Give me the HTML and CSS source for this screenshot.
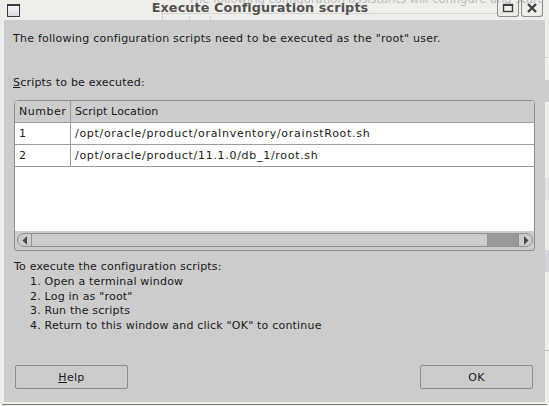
FILE: index.html
```html
<!DOCTYPE html>
<html>
<head>
<meta charset="utf-8">
<link rel="stylesheet" href="styles.css">
</head>
<body>
<div class="screen">
  <div class="titlebar">
    <div class="bgwin">
      <span class="bgtext">The following configuration assistants will configure and start</span>
      <span class="bgbox"></span>
      <span class="bgcol"></span>
    </div>
    <span class="winicon"></span>
    <span class="title">Execute Configuration scripts</span>
    <span class="tbtn">
      <svg width="12" height="10" viewBox="0 0 12 10"><rect x="1.5" y="1.5" width="9" height="7" fill="none" stroke="#3c3c3c" stroke-width="1.4"/><line x1="1.5" y1="2" x2="10.5" y2="2" stroke="#3c3c3c" stroke-width="2"/></svg>
    </span>
    <span class="tbtn">
      <svg width="12" height="10" viewBox="0 0 12 10"><path d="M2 1 L10 9 M10 1 L2 9" stroke="#3c3c3c" stroke-width="2.2" fill="none"/></svg>
    </span>
  </div>
  <div class="middle">
    <div class="leftedge"></div>
    <div class="dialog">
      <p class="intro">The following configuration scripts need to be executed as the "root" user.</p>
      <p class="label"><u>S</u>cripts to be executed:</p>
      <div class="tablebox">
        <div class="viewport">
          <div class="row head"><span class="c1">Number</span><span class="c2">Script Location</span></div>
          <div class="row"><span class="c1">1</span><span class="c2 path">/opt/oracle/product/oraInventory/orainstRoot.sh</span></div>
          <div class="row"><span class="c1">2</span><span class="c2 path">/opt/oracle/product/11.1.0/db_1/root.sh</span></div>
        </div>
        <div class="scrollarea">
          <div class="hscroll">
            <span class="sbtn left"><svg width="6" height="9" viewBox="0 0 6 9"><path d="M5 0 L5 9 L0.5 4.5 Z" fill="#4a4a4a"/></svg></span>
            <span class="track"></span>
            <span class="thumb"></span>
            <span class="sbtn right"><svg width="6" height="9" viewBox="0 0 6 9"><path d="M1 0 L1 9 L5.5 4.5 Z" fill="#4a4a4a"/></svg></span>
          </div>
        </div>
      </div>
      <div class="instructions">
        <p>To execute the configuration scripts:</p>
        <ol>
          <li>1. Open a terminal window</li>
          <li>2. Log in as "root"</li>
          <li>3. Run the scripts</li>
          <li>4. Return to this window and click "OK" to continue</li>
        </ol>
      </div>
      <div class="buttons">
        <button class="btn"><u>H</u>elp</button>
        <button class="btn">OK</button>
      </div>
    </div>
    <div class="rightedge">
      <span class="frag f1"></span>
      <span class="frag f2"></span>
      <span class="frag f3"></span>
      <span class="frag f4"></span>
      <span class="frag f5"></span>
    </div>
  </div>
  <div class="bottomframe"><span class="frameline"></span></div>
</div>
</body>
</html>
```

FILE: styles.css
```css
html, body {
  margin: 0;
  padding: 0;
}
body {
  width: 549px;
  height: 406px;
  overflow: hidden;
  background: #efedea;
  font-family: "DejaVu Sans", "Liberation Sans", sans-serif;
  font-size: 11px;
  color: #1a1a1a;
}
.screen {
  width: 549px;
  height: 406px;
  display: flex;
  flex-direction: column;
}
.titlebar {
  position: relative;
  height: 20px;
  flex: none;
  display: flex;
  align-items: flex-start;
  background: #f0eeeb;
}
.bgwin {
  position: absolute;
  inset: 0;
  overflow: hidden;
}
.bgtext {
  position: absolute;
  left: 188px;
  top: -8px;
  font-size: 11.5px;
  color: #bcbcbc;
  white-space: nowrap;
}
.bgbox {
  position: absolute;
  left: 162px;
  top: 13px;
  width: 340px;
  height: 10px;
  border-left: 1px solid #cfcfcf;
  border-top: 1px solid #d6d6d6;
}
.bgcol {
  position: absolute;
  left: 189px;
  top: 16px;
  width: 20px;
  height: 6px;
  border-left: 1px solid #d6d6d6;
  border-right: 1px solid #d6d6d6;
}
.winicon {
  position: relative;
  flex: none;
  width: 11px;
  height: 10px;
  margin: 4px 0 0 7px;
  border: 1px solid #3a3a3a;
  border-top-width: 2px;
  background: linear-gradient(#f4f4f8, #d9dbe6);
}
.title {
  position: relative;
  flex: 1;
  text-align: center;
  padding-left: 3px;
  font-weight: bold;
  font-size: 12.8px;
  line-height: 16px;
  color: #525252;
  letter-spacing: 0.1px;
}
.tbtn {
  position: relative;
  flex: none;
  width: 22px;
  height: 19px;
  margin-top: -2px;
  margin-right: 2px;
  border: 1px solid #8c8c8c;
  border-top: none;
  border-radius: 0 0 3px 3px;
  display: flex;
  align-items: center;
  justify-content: center;
  padding-top: 2px;
  box-sizing: border-box;
}
.tbtn:last-child {
  margin-right: 6px;
}
.middle {
  display: flex;
  height: 382px;
  flex: none;
}
.leftedge {
  width: 4px;
  flex: none;
  background: #f0eeeb;
}
.dialog {
  width: 541px;
  flex: none;
  background: #cccccc;
  display: flex;
  flex-direction: column;
  padding: 0 10px;
  box-sizing: border-box;
}
p {
  margin: 0;
}
.intro {
  margin-top: 11px;
  line-height: 15px;
  margin-left: -1px;
  letter-spacing: 0.24px;
}
.label {
  margin-top: 29px;
  line-height: 15px;
  margin-left: -1px;
  letter-spacing: 0.2px;
}
.tablebox {
  margin-top: 10px;
  height: 151px;
  box-sizing: border-box;
  border: 1px solid #8e8e8e;
  border-radius: 4px 4px 3px 3px;
  display: flex;
  flex-direction: column;
  overflow: hidden;
}
.viewport {
  height: 130px;
  flex: none;
  background: #ffffff;
}
.row {
  display: flex;
  height: 22px;
  box-sizing: border-box;
  border-bottom: 1px solid #9c9c9c;
  line-height: 21px;
}
.row.head {
  background: #cccccc;
}
.c1 {
  width: 56px;
  flex: none;
  padding-left: 4px;
  box-sizing: border-box;
  border-right: 1px solid #9c9c9c;
  letter-spacing: 0.5px;
}
.c2 {
  padding-left: 4px;
  letter-spacing: 0.1px;
}
.c2.path {
  letter-spacing: 0.7px;
}
.scrollarea {
  flex: 1;
  padding: 2px 1px 0 2px;
}
.hscroll {
  height: 14px;
  box-sizing: border-box;
  border: 1px solid #909090;
  border-radius: 7px;
  display: flex;
  overflow: hidden;
}
.sbtn {
  flex: none;
  width: 13px;
  display: flex;
  align-items: center;
  justify-content: center;
}
.sbtn.left {
  border-right: 1px solid #909090;
}
.sbtn.right {
  border-left: 1px solid #909090;
}
.track {
  flex: 1;
}
.thumb {
  width: 31px;
  flex: none;
  background: #9a9a9a;
}
.instructions {
  margin-top: 9px;
  line-height: 14.8px;
  letter-spacing: 0.2px;
}
ol {
  list-style: none;
  margin: 0;
  padding: 0 0 0 16px;
}
.buttons {
  margin-top: auto;
  margin-bottom: 13px;
  display: flex;
  justify-content: space-between;
  padding-left: 1px;
  padding-right: 2px;
}
.btn {
  width: 113px;
  height: 24px;
  border: 1px solid #8c8c8c;
  border-radius: 2px;
  background: #cccccc;
  font-family: "DejaVu Sans", "Liberation Sans", sans-serif;
  font-size: 11px;
  letter-spacing: 0.3px;
  color: #1a1a1a;
  padding: 0;
}
.rightedge {
  position: relative;
  flex: 1;
  background: #f0eeeb;
}
.frag {
  position: absolute;
  left: 0;
  width: 4px;
}
.f1 { top: 37px; height: 1px; background: #d8d8d8; }
.f2 { top: 60px; height: 22px; background: #cccccc; }
.f3 { top: 158px; height: 22px; background: #e2e2e2; }
.f4 { top: 230px; height: 22px; background: #d4d6dc; }
.f5 { top: 330px; height: 1px; background: #bbbbbb; }
.bottomframe {
  position: relative;
  flex: 1;
  background: #f0eeeb;
}
.frameline {
  position: absolute;
  left: 2px;
  right: 2px;
  top: 2px;
  height: 1px;
  background: #7a7a7a;
  border-radius: 2px;
}
```
